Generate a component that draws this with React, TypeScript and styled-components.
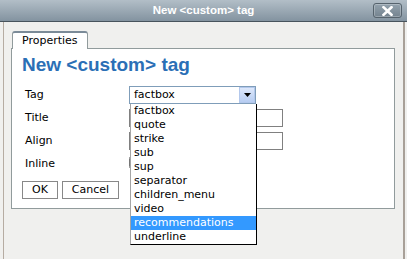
import React from "react";
import styled, { createGlobalStyle } from "styled-components";

const Global = createGlobalStyle`
  html, body { margin: 0; padding: 0; background: #f0f0ee; }
  body { font-family: "DejaVu Sans", Verdana, sans-serif; font-size: 11px; color: #000; }
  * { box-sizing: border-box; }
`;

const Window = styled.div`
  width: 407px;
  height: 259px;
  display: flex;
  flex-direction: column;
  background: #f0f0ee;
  overflow: hidden;
`;

const TitleBar = styled.div`
  flex: none;
  height: 22px;
  display: grid;
  grid-template-columns: 1fr auto 1fr;
  align-items: start;
  background: linear-gradient(#b2bec7, #8393a0);
  border-bottom: 1px solid #48545d;
`;

const Title = styled.div`
  grid-column: 2;
  font-family: "Liberation Sans", Arial, sans-serif;
  font-weight: bold;
  font-size: 11.5px;
  line-height: 21px;
  color: #fff;
`;

const CloseButton = styled.button`
  grid-column: 3;
  justify-self: end;
  margin: 3px 5px 0 0;
  width: 29px;
  height: 15px;
  padding: 0;
  display: flex;
  align-items: center;
  justify-content: center;
  border: 1px solid #56636d;
  border-radius: 3px;
  background: linear-gradient(#93a2ad, #74838f);
  box-shadow: inset 0 0 0 1px rgba(255, 255, 255, 0.25);
`;

const Frame = styled.div`
  flex: 1;
  margin: 0 2px 0 3px;
  border-left: 1px solid #b6aca2;
  border-right: 2px solid #a8a098;
  padding: 9px 8px 0 7px;
`;

const TabRow = styled.div`
  display: flex;
  padding-left: 1px;
`;

const Tab = styled.div`
  position: relative;
  z-index: 1;
  height: 18px;
  margin-bottom: -1px;
  padding: 0 9px;
  background: #fff;
  border: 1px solid #919b9c;
  border-top: 2px solid #7b8b98;
  border-bottom: none;
  border-radius: 3px 3px 0 0;
  line-height: 15px;
`;

const Panel = styled.div`
  height: 161px;
  background: #fff;
  border: 1px solid #919b9c;
`;

const Heading = styled.h2`
  margin: 5px 0 7px 10px;
  font-family: "Liberation Sans", Arial, sans-serif;
  font-weight: bold;
  font-size: 19px;
  line-height: 22px;
  color: #2b6fb6;
`;

const Form = styled.div`
  margin-left: 13px;
  display: grid;
  grid-template-columns: 104px auto;
  grid-auto-rows: 23px;
  align-items: center;
`;

const Label = styled.div`
  line-height: 14px;
`;

const Select = styled.div`
  position: relative;
  width: 127px;
  height: 18px;
  display: flex;
  align-items: center;
  background: #fff;
  border: 1px solid #7f9db9;
`;

const SelectValue = styled.div`
  flex: 1;
  padding-left: 4px;
  line-height: 14px;
`;

const ArrowButton = styled.div`
  width: 16px;
  height: 16px;
  display: flex;
  align-items: center;
  justify-content: center;
  background: linear-gradient(#dde8fb, #b7cdf2);
  border: 1px solid #b3c8ec;
`;

const List = styled.div`
  position: absolute;
  z-index: 2;
  top: 17px;
  left: 0;
  width: 127px;
  background: #fff;
  border-left: 1px solid #a5a5a5;
  border-right: 1px solid #000;
  border-bottom: 1px solid #000;
`;

const Item = styled.div<{ $active?: boolean }>`
  height: 14px;
  line-height: 14px;
  padding-left: 3px;
  white-space: nowrap;
  background: ${(p) => (p.$active ? "#3399ff" : "transparent")};
  color: ${(p) => (p.$active ? "#fff" : "#000")};
`;

const TextInput = styled.input`
  width: 154px;
  height: 18px;
  margin: 0;
  padding: 0 2px;
  border: 1px solid #808080;
  font: inherit;
`;

const Check = styled.input`
  margin: 0;
  width: 13px;
  height: 13px;
`;

const ButtonRow = styled.div`
  display: flex;
  gap: 4px;
  margin: 6px 0 0 10px;
`;

const Button = styled.button<{ $w: number }>`
  width: ${(p) => p.$w}px;
  height: 18px;
  padding: 0;
  background: #fff;
  border: 1px solid #888;
  font: inherit;
  color: #000;
  line-height: 14px;
`;

const options = [
  "factbox",
  "quote",
  "strike",
  "sub",
  "sup",
  "separator",
  "children_menu",
  "video",
  "recommendations",
  "underline",
];

export default function App() {
  return (
    <>
      <Global />
      <Window>
        <TitleBar>
          <Title>New &lt;custom&gt; tag</Title>
          <CloseButton aria-label="Close">
            <svg width="11" height="10" viewBox="0 0 11 10">
              <path d="M1.5 1.2 L9.5 8.8 M9.5 1.2 L1.5 8.8" stroke="#fff" strokeWidth="2.6" strokeLinecap="square" />
            </svg>
          </CloseButton>
        </TitleBar>
        <Frame>
          <TabRow>
            <Tab>Properties</Tab>
          </TabRow>
          <Panel>
            <Heading>New &lt;custom&gt; tag</Heading>
            <Form>
              <Label>Tag</Label>
              <div>
                <Select>
                  <SelectValue>factbox</SelectValue>
                  <ArrowButton>
                    <svg width="7" height="4" viewBox="0 0 7 4">
                      <path d="M0 0 H7 L3.5 4 Z" fill="#000" />
                    </svg>
                  </ArrowButton>
                  <List>
                    {options.map((o) => (
                      <Item key={o} $active={o === "recommendations"}>
                        {o}
                      </Item>
                    ))}
                  </List>
                </Select>
              </div>
              <Label>Title</Label>
              <TextInput type="text" />
              <Label>Align</Label>
              <TextInput type="text" />
              <Label>Inline</Label>
              <div>
                <Check type="checkbox" />
              </div>
            </Form>
            <ButtonRow>
              <Button $w={36}>OK</Button>
              <Button $w={57}>Cancel</Button>
            </ButtonRow>
          </Panel>
        </Frame>
      </Window>
    </>
  );
}
